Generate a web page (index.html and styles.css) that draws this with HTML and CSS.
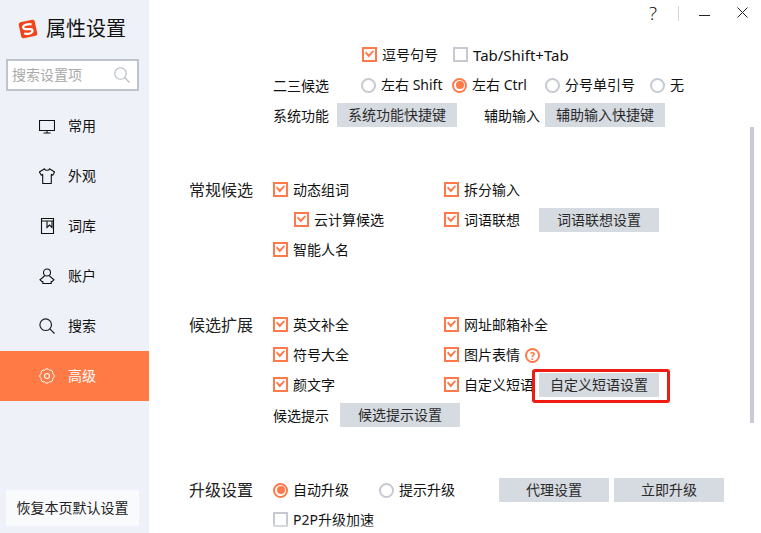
FILE: index.html
```html
<!DOCTYPE html>
<html lang="zh">
<head>
<meta charset="utf-8">
<title>属性设置</title>
<link rel="stylesheet" href="styles.css">
</head>
<body>
<div class="window">
  <aside class="sidebar">
    <div class="brand">
      <svg class="logo" viewBox="0 0 20 20"><g transform="rotate(-12 10 10)"><rect x="1.800" y="1.800" width="16.400" height="16.400" rx="2.200" fill="#f0441a"/><path d="M14.500 6.400C12.500 5.200 8.500 5 6.800 5.800 5 6.700 5.300 8.800 7 9.400L12.800 10.700C14.600 11.400 14.500 13.500 12.700 14.200 11 14.900 7.500 14.800 5.200 13.600" fill="none" stroke="#fff" stroke-width="2.200"/></g></svg>
      <span class="brand-title">属性设置</span>
    </div>
    <div class="search">
      <span class="search-text">搜索设置项</span>
      <svg class="search-icon" viewBox="0 0 16 16"><circle cx="6.500" cy="6.500" r="5.700" fill="none" stroke="#b4b8bf" stroke-width="1.100"/><path d="M10.700 10.700 15.500 15.500" stroke="#b4b8bf" stroke-width="1.200"/></svg>
    </div>
    <nav class="nav">
      <div class="nav-item">
        <svg class="nav-icon" viewBox="0 0 16 16"><path d="M.5 2.500h15v10H.5zM8 12.500v2.500M4.500 15h7" fill="none" stroke="#111" stroke-width="1.100"/></svg>
        <span>常用</span>
      </div>
      <div class="nav-item">
        <svg class="nav-icon" viewBox="0 0 16 16"><path d="M5.500 .8C6 2.800 10 2.800 10.500 .8L15.600 4 13.700 7.200 12.300 6.400V15.500H3.700V6.400L2.300 7.200.4 4z" fill="none" stroke="#111" stroke-width="1.100" stroke-linejoin="round"/></svg>
        <span>外观</span>
      </div>
      <div class="nav-item">
        <svg class="nav-icon" viewBox="0 0 16 16"><path d="M2.500 .5H14.500V15.500H2.500zM2.500 3H14.500M8 3V9.500L10.500 7 13 9.500V3" fill="none" stroke="#111" stroke-width="1.100"/></svg>
        <span>词库</span>
      </div>
      <div class="nav-item">
        <svg class="nav-icon" viewBox="0 0 16 16"><circle cx="8" cy="4.500" r="3.500" fill="none" stroke="#111" stroke-width="1.100"/><path d="M5.500 8 1 11.800 2.800 13.500H3.800V15.500H12.200V13.500H13.200L15 11.800 10.500 8" fill="none" stroke="#111" stroke-width="1.100"/></svg>
        <span>账户</span>
      </div>
      <div class="nav-item">
        <svg class="nav-icon" viewBox="0 0 16 16"><circle cx="6.700" cy="6.700" r="5.800" fill="none" stroke="#222" stroke-width="1.200"/><path d="M10.800 10.800 15.500 15.500" stroke="#222" stroke-width="1.200"/></svg>
        <span>搜索</span>
      </div>
      <div class="nav-item active">
        <svg class="nav-icon" viewBox="0 0 16 16"><path d="M13.730 10.370A2.600 2.600 0 0 1 10.370 13.730A2.600 2.600 0 0 1 5.630 13.730A2.600 2.600 0 0 1 2.270 10.370A2.600 2.600 0 0 1 2.270 5.630A2.600 2.600 0 0 1 5.630 2.270A2.600 2.600 0 0 1 10.370 2.270A2.600 2.600 0 0 1 13.730 5.630A2.600 2.600 0 0 1 13.730 10.370z" fill="none" stroke="#fff" stroke-width="1"/><circle cx="8" cy="8" r="2.500" fill="none" stroke="#fff" stroke-width="1.100"/></svg>
        <span>高级</span>
      </div>
    </nav>
    <button class="restore">恢复本页默认设置</button>
  </aside>

  <main class="main">
    <header class="titlebar">
      <span class="tb-help">?</span>
      <span class="tb-sep"></span>
      <svg class="tb-min" viewBox="0 0 11 11"><path d="M0 6.500h11" stroke="#222" stroke-width="1"/></svg>
      <svg class="tb-close" viewBox="0 0 11 11"><path d="M.5 .5 10.500 10.500M10.500 .5 .5 10.500" stroke="#222" stroke-width="1"/></svg>
    </header>

    <section class="block block-top">
      <div class="row row-first">
        <label class="check on w91"><i class="box"></i>逗号句号</label>
        <label class="check latin"><i class="box"></i>Tab/Shift+Tab</label>
      </div>
      <div class="row">
        <span class="lead">二三候选</span>
        <label class="radio w91"><i class="dot"></i>左右 Shift</label>
        <label class="radio on w93"><i class="dot"></i>左右 Ctrl</label>
        <label class="radio w105"><i class="dot"></i>分号单引号</label>
        <label class="radio"><i class="dot"></i>无</label>
      </div>
      <div class="row">
        <span class="lead-btn">系统功能</span>
        <button class="btn w120">系统功能快捷键</button>
        <span class="lead-btn second">辅助输入</span>
        <button class="btn w120">辅助输入快捷键</button>
      </div>
    </section>

    <section class="block">
      <h2 class="block-title">常规候选</h2>
      <div class="block-body">
        <div class="row">
          <label class="check on col"><i class="box"></i>动态组词</label>
          <label class="check on"><i class="box"></i>拆分输入</label>
        </div>
        <div class="row">
          <label class="check on col indent"><i class="box"></i>云计算候选</label>
          <label class="check on w95"><i class="box"></i>词语联想</label>
          <button class="btn w120">词语联想设置</button>
        </div>
        <div class="row">
          <label class="check on"><i class="box"></i>智能人名</label>
        </div>
      </div>
    </section>

    <section class="block block-ext">
      <h2 class="block-title">候选扩展</h2>
      <div class="block-body">
        <div class="row">
          <label class="check on col"><i class="box"></i>英文补全</label>
          <label class="check on"><i class="box"></i>网址邮箱补全</label>
        </div>
        <div class="row">
          <label class="check on col"><i class="box"></i>符号大全</label>
          <label class="check on"><i class="box"></i>图片表情<span class="help">?</span></label>
        </div>
        <div class="row">
          <label class="check on col"><i class="box"></i>颜文字</label>
          <label class="check on w95"><i class="box"></i>自定义短语</label>
          <button class="btn w120 marked">自定义短语设置<span class="mark"></span></button>
        </div>
        <div class="row">
          <span class="lead-btn wide">候选提示</span>
          <button class="btn w120">候选提示设置</button>
        </div>
      </div>
    </section>

    <section class="block block-up">
      <h2 class="block-title">升级设置</h2>
      <div class="block-body">
        <div class="row">
          <label class="radio on w106"><i class="dot"></i>自动升级</label>
          <label class="radio w120"><i class="dot"></i>提示升级</label>
          <button class="btn w110">代理设置</button>
          <button class="btn w110 next">立即升级</button>
        </div>
        <div class="row">
          <label class="check"><i class="box"></i>P2P升级加速</label>
        </div>
      </div>
    </section>

    <div class="scrollbar"></div>
    <div class="fade"></div>
  </main>
</div>
</body>
</html>
```

FILE: styles.css
```css
* { box-sizing: border-box; }
html, body { margin: 0; padding: 0; }
body {
  width: 761px;
  height: 533px;
  overflow: hidden;
  background: #fff;
  color: #111;
  font-family: "Noto Sans", "Noto Sans CJK SC", sans-serif;
  font-size: 14px;
}
.window { display: flex; width: 761px; height: 533px; }

.sidebar {
  width: 149px;
  flex: none;
  height: 533px;
  background: #eef1f7;
  display: flex;
  flex-direction: column;
}
.brand { display: flex; align-items: center; height: 59px; padding-left: 18px; padding-bottom: 1px; }
.logo { width: 20px; height: 20px; margin-right: 8px; }
.brand-title { font-size: 20px; line-height: 28px; color: #111; }
.search {
  margin: 0 10px 0 6px;
  height: 32px;
  border: 2px solid #bfc4cc;
  background: #fff;
  display: flex;
  align-items: center;
  justify-content: space-between;
  padding: 0 7px 0 4px;
}
.search-text { color: #a9a9a9; line-height: 20px; }
.search-icon { width: 16px; height: 16px; }
.nav { margin-top: 10px; }
.nav-item { height: 50px; display: flex; align-items: center; padding-left: 39px; }
.nav-item span { margin-bottom: 2px; }
.nav-icon { width: 16px; height: 16px; margin-right: 13px; flex: none; }
.nav-item.active { background: #ff7a45; color: #fff; }
.restore {
  margin: auto 10px 7px 6px;
  height: 36px;
  border: 0;
  background: #f9fafc;
  color: #222;
  font: inherit;
  padding: 0 0 2px;
}

.main { position: relative; flex: 1; height: 533px; overflow: hidden; }
.titlebar { height: 40px; display: flex; align-items: flex-start; padding-top: 6px; padding-left: 498px; }
.tb-help { font-family: "Open Sans", sans-serif; font-weight: 300; font-size: 19px; line-height: 15px; width: 12px; text-align: center; color: #000; }
.tb-sep { width: 1px; height: 15px; background: #d3d5da; margin-left: 19px; }
.tb-min { width: 11px; height: 11px; margin-left: 20px; margin-top: 3px; }
.tb-close { width: 11px; height: 11px; margin-left: 27px; margin-top: 1px; }

.row { height: 30px; display: flex; align-items: center; white-space: nowrap; }
.block { display: flex; padding-left: 40px; }
.block-top { flex-direction: column; padding-left: 124px; height: 135px; }
.block-ext { margin-top: 45px; }
.block-up { margin-top: 45px; }
.block-title { margin: 0; width: 84px; flex: none; font-size: 16px; font-weight: 400; line-height: 30px; color: #222; }
.block-body { flex: 1; }
.row-first { padding-left: 89px; }

.check, .radio { display: inline-flex; align-items: center; line-height: 20px; color: #111; }
.latin { font-size: 15px; }
.box {
  width: 15px; height: 15px; flex: none;
  border: 2px solid #c6c9d1;
  background: #fff;
  margin: 0 5px 1px 0;
  position: relative;
}
.check.on .box { border-color: #ff7a4a; }
.check.on .box::after {
  content: "";
  position: absolute;
  left: 1px; top: 1px;
  width: 9px; height: 9px;
  background: #ff7a4a;
  clip-path: polygon(0 32%, 12% 18%, 42% 46%, 88% 2%, 100% 16%, 42% 82%);
}
.dot {
  width: 15px; height: 15px; flex: none;
  border: 2px solid #c6c9d1;
  border-radius: 50%;
  margin-right: 5px;
  position: relative;
}
.radio.on .dot { border-color: #ff7a4a; }
.radio.on .dot::after {
  content: "";
  position: absolute;
  left: 1.500px; top: 1.500px;
  width: 8px; height: 8px;
  border-radius: 50%;
  background: #ff7a4a;
}
.col { width: 171px; }
.indent { padding-left: 21px; }
.w91 { width: 91px; }
.w93 { width: 93px; }
.w95 { width: 95px; }
.w105 { width: 105px; }
.w106 { width: 106px; }
.w120 { width: 120px; }
.w110 { width: 110px; }
.lead { width: 88px; }
.lead-btn { width: 64px; }
.lead-btn.wide { width: 67px; }
.lead-btn.second { width: 61px; margin-left: 27px; }

.btn {
  height: 24px;
  border: 0;
  padding: 0;
  background: #d6dae1;
  color: #2a2a2a;
  font: inherit;
  line-height: 24px;
  flex: none;
  text-align: center;
}
.btn.next { margin-left: 5px; }
.marked { position: relative; }
.mark {
  position: absolute;
  left: -7px; top: -4px;
  width: 138px; height: 34px;
  border: 3px solid #f01c14;
  border-radius: 3px;
}
.help {
  display: inline-block;
  width: 15px; height: 15px;
  margin-left: 5px;
  border: 2px solid #ff7a4a;
  border-radius: 50%;
  color: #ff7a4a;
  font-size: 11px;
  font-weight: 700;
  line-height: 11px;
  text-align: center;
}
.scrollbar {
  position: absolute;
  left: 601px; top: 127px;
  width: 4px; height: 296px;
  background: #c8cad4;
}
.fade {
  position: absolute;
  left: 0; right: 0; bottom: 0;
  height: 10px;
  background: linear-gradient(rgba(255,255,255,0), #fff);
}
```
